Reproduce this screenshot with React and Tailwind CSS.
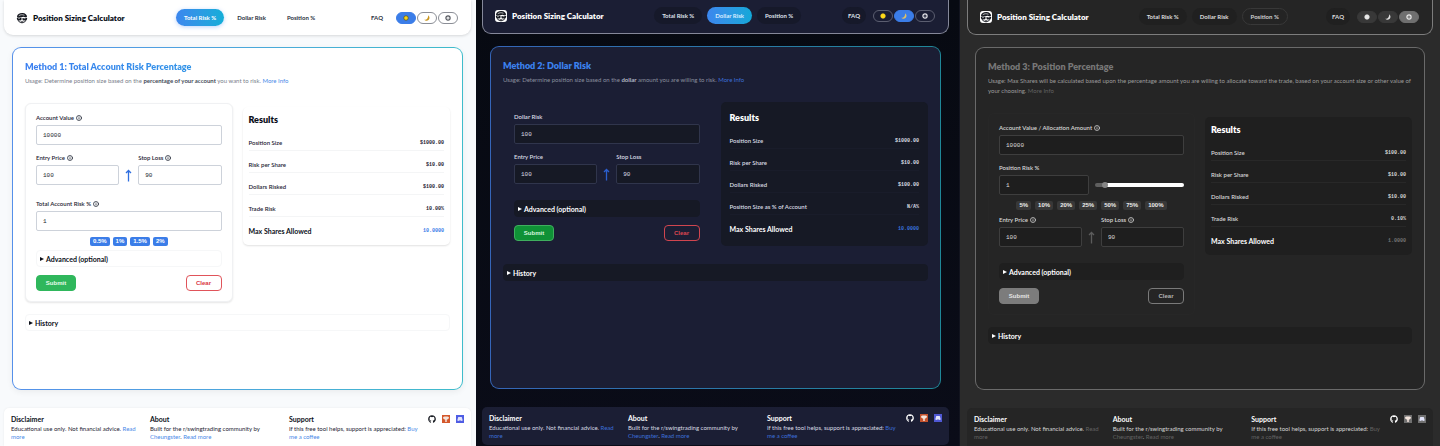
import clsx from 'clsx';
import { Info } from 'lucide-react';
import { FaGithub } from 'react-icons/fa';

const themes = {
  light: {
    page: 'bg-[#f8fafc] text-[#1e2433] pl-1 pr-[5px]',
    header: 'bg-white pt-[9px] rounded-b-[9px] shadow-[0_1px_3px_rgba(0,0,0,0.14)]',
    brand: 'text-[#0b0f19]',
    logo: 'bg-white',
    pill: 'text-[#2a3040]',
    activePill: 'bg-linear-to-r from-[#3b86ee] to-[#12aed8] text-white shadow-[0_1px_4px_rgba(59,130,246,0.35)]',
    toggle: 'border-[#8b8e96] bg-white text-[#55585f]',
    activeToggle: 'border-[#3b7de8] bg-[#3b7de8] text-[#333]',
    sun: '#f7d51d',
    sunEdge: '#5a5418',
    moon: '#c9951c',
    frame: 'bg-linear-to-r from-[#5590ea] to-[#3fbccb] shadow-[0_2px_6px_rgba(0,0,0,0.06)]',
    card: 'bg-white',
    title: 'bg-linear-to-r from-[#3b7ff0] to-[#12aed8] bg-clip-text text-transparent',
    usage: 'text-[#7a808c]',
    strong: 'text-[#454b58]',
    link: 'text-[#4a8ae8]',
    form: 'border-[#f0f1f3] bg-white shadow-[0_1px_2px_rgba(0,0,0,0.1)]',
    input: 'border-[#cdd2da] bg-white text-[#22262e]',
    arrow: 'text-[#2f6fe0]',
    chip: 'bg-[#3b7de8] text-white',
    details: 'border-[#f6f7f8] bg-white text-[#0b0f19]',
    submit: 'border-[#2fb75c] bg-[#2fb75c] text-[#e6fbec]',
    clear: 'border-[#e0545a] text-[#d9363e]',
    results: 'mt-1 px-1.5 pt-[7px] pb-1.5 bg-white shadow-[0_1px_2px_rgba(0,0,0,0.12)]',
    heading: 'text-[#0b0f19]',
    line: 'border-[#f4f5f6]',
    value: 'text-[#1e2433]',
    total: 'text-[#3b7de8]',
    footer: 'bg-white rounded-t-[5px] shadow-[0_0_2px_rgba(0,0,0,0.08)]',
    github: 'text-[#1a1d24]',
    reddit: 'bg-[#d4582c]',
    discord: 'bg-[#4f5de4]',
  },
  dark: {
    page: 'bg-linear-to-b from-[#070a12] to-[#0a0c18] text-[#d9dbe4] pl-1.5 pr-[10px]',
    header: 'bg-[#1b1e34] pt-[7px] rounded-b-[9px] border border-t-0 border-[#85889a]',
    brand: 'text-white',
    logo: 'bg-white',
    pill: 'bg-[#16192a] text-[#dfe1ea]',
    activePill: 'bg-linear-to-r from-[#3b86ee] to-[#12a8d8] text-[#d8ecff]',
    toggle: 'border-[#5b5e70] bg-[#1b1e34] text-[#e4e4e8]',
    activeToggle: 'border-[#3b7de8] bg-[#3b7de8] text-white',
    sun: '#ffd91a',
    sunEdge: '#ffd91a',
    moon: '#e0c268',
    frame: 'bg-linear-to-r from-[#3565b8] to-[#1f8798]',
    card: 'bg-[#1b1e34]',
    title: 'text-[#3b82f0]',
    usage: 'text-[#8a8e9e]',
    strong: 'text-[#b4b7c4]',
    link: 'text-[#3b6fd8]',
    form: 'border-transparent',
    input: 'border-[#30354c] bg-[#161925] text-[#d9dbe4]',
    arrow: 'text-[#2b5fd0]',
    chip: 'bg-[#3b7de8] text-white',
    details: 'border-[#161925] bg-[#161925] text-white',
    submit: 'border-[#3fae5e] bg-[#0f9136] text-[#d6f5df]',
    clear: 'border-[#d0454f] text-[#dc4650]',
    results: 'px-[9px] pt-2.5 pb-[9px] bg-[#161925]',
    heading: 'text-white',
    line: 'border-[#191c2a]',
    value: 'text-[#d9dbe4]',
    total: 'text-[#3a72dc]',
    footer: 'bg-[#1b1e34] rounded-[5px] mb-px',
    github: 'text-white',
    reddit: 'bg-[#c4532e]',
    discord: 'bg-[#4f58d4]',
  },
  gray: {
    page: 'border-l border-[#12141f] bg-[#2b2b2b] text-[#d6d6d6] pl-[7px] pr-[7px]',
    header: 'bg-[#252525] pt-2 rounded-b-[9px] border border-t-0 border-[#7d7d7d]',
    brand: 'text-white',
    logo: 'bg-white',
    pill: 'bg-[#202020] text-[#dcdcdc]',
    activePill: 'border border-[#383838] bg-[#242424] text-[#cfcfcf]',
    toggle: 'border-[#383838] bg-[#383838] text-[#e4e4e4]',
    activeToggle: 'border-[#6f6f6f] bg-[#6f6f6f] text-[#e8e8e8]',
    sun: '#e8e8e8',
    sunEdge: '#e8e8e8',
    moon: '#e0e0e0',
    frame: 'bg-[#6a6a6a]',
    card: 'bg-[#252525]',
    title: 'text-[#777777]',
    usage: 'text-[#9c9c9c]',
    strong: 'text-[#b4b4b4]',
    link: 'text-[#626262]',
    form: 'border-[#272727]',
    input: 'border-[#3e3e3e] bg-[#1e1e1e] text-[#dcdcdc]',
    arrow: 'text-[#5c5c5c]',
    chip: 'bg-[#383838] text-[#ececec]',
    details: 'border-[#1f1f1f] bg-[#1f1f1f] text-white',
    submit: 'border-[#7c7c7c] bg-[#7c7c7c] text-[#e6e6e6]',
    clear: 'border-[#7a7a7a] text-[#b4b4b4]',
    results: 'mt-1 px-1.5 pt-[7px] pb-1.5 bg-[#1f1f1f]',
    heading: 'text-white',
    line: 'border-[#282828]',
    value: 'text-[#d6d6d6]',
    total: 'text-[#757575]',
    footer: 'bg-[#252525] rounded-t-[5px]',
    github: 'text-white',
    reddit: 'bg-[#707070]',
    discord: 'bg-[#707070]',
  },
};

const navItems = ['Total Risk %', 'Dollar Risk', 'Position %'];

function Logo({ className }) {
  return (
    <svg viewBox="0 0 24 24" className={clsx('size-3 rounded-[3px]', className)} aria-hidden="true">
      <path d="M2 9C2.500 4.500 7 2 13 2.200c5.500.3 9 3.300 9 7.300l-1.500 1.500-6-1.500L9 11l-6 .5z" fill="#15181f" />
      <path d="M5.500 7.500c3-2.200 7-2.700 11.500-1" fill="none" stroke="#fff" strokeWidth="1.400" />
      <path d="M1.500 12h9.500v3.500c-2 2-6.500 2-8.500 0zM13 12h9.500l-1 3.500c-2 2-6.500 2-8.500 0z" fill="#15181f" />
      <path d="M4 13.200h4M15 13.200h4" stroke="#fff" />
      <path d="M3.800 15c.8 4 4 6.500 8.200 6.500s7.400-2.500 8.200-6.500" fill="none" stroke="#15181f" strokeWidth="2" />
      <path d="M9 18.300c2 1 4.500.8 6.500-.5" fill="none" stroke="#15181f" strokeWidth="1.500" />
    </svg>
  );
}

function ModeIcon({ mode, theme }) {
  if (mode === 'light') {
    return (
      <svg viewBox="0 0 12 12" className="size-1.5" aria-hidden="true">
        <circle cx="6" cy="6" r="4.500" fill={theme.sun} stroke={theme.sunEdge} strokeWidth="1.500" />
      </svg>
    );
  }
  if (mode === 'dark') {
    return (
      <svg viewBox="0 0 12 12" className="size-1.5" aria-hidden="true">
        <path d="M8.500.5c3.200 3 3.200 7 .5 9.500C6.500 12.200 2.500 12 .5 9.500c3 .2 5-.6 6.200-2.600C8 5 8.500 3 8.500.5z" fill={theme.moon} />
      </svg>
    );
  }
  return (
    <svg viewBox="0 0 12 12" className="size-1.5" aria-hidden="true">
      <circle cx="6" cy="6" r="4.200" fill="none" stroke="currentColor" strokeWidth="2.400" />
      <circle cx="6" cy="6" r="1" fill="currentColor" />
    </svg>
  );
}

function Header({ theme, mode, active }) {
  return (
    <header className={clsx('grid grid-cols-[161fr_190fr_91fr] items-center pb-[9px] pl-3 pr-[13px]', theme.header)}>
      <div className={clsx('flex items-center gap-[5px] text-[8px]/[12px] font-extrabold', theme.brand)}>
        <Logo className={theme.logo} />
        Position Sizing Calculator
      </div>
      <nav className="flex gap-[5px]">
        {navItems.map((item) => (
          <a
            key={item}
            href="#"
            className={clsx(
              'flex h-[17px] items-center justify-center rounded-full px-2 font-bold whitespace-nowrap',
              item === active ? theme.activePill : theme.pill,
            )}
          >
            {item}
          </a>
        ))}
      </nav>
      <div className="flex items-center justify-end gap-px">
        <a href="#" className={clsx('mr-1.5 flex h-[17px] items-center rounded-full px-1.5 font-bold', theme.pill)}>
          FAQ
        </a>
        {['light', 'dark', 'gray'].map((m) => (
          <button
            key={m}
            type="button"
            aria-label={`${m} theme`}
            className={clsx(
              'flex h-3 w-5 items-center justify-center rounded-full border',
              m === mode ? theme.activeToggle : theme.toggle,
            )}
          >
            <ModeIcon mode={m} theme={theme} />
          </button>
        ))}
      </div>
    </header>
  );
}

function Field({ theme, id, label, value, info, children }) {
  return (
    <div className="min-w-0">
      <label htmlFor={id} className="mb-[3px] flex items-center gap-0.5 font-semibold">
        {label}
        {info && <Info size={6} strokeWidth={3} />}
      </label>
      <div className="grid auto-cols-fr grid-flow-col items-center gap-1.5">
        <input
          id={id}
          type="text"
          defaultValue={value}
          className={clsx("h-5 w-full min-w-0 rounded-[2px] border px-1.5 font-['Liberation_Mono',monospace] text-[6px]", theme.input)}
        />
        {children}
      </div>
    </div>
  );
}

function Prices({ theme, id, info }) {
  return (
    <div className="grid grid-cols-[1fr_19px_1fr]">
      <Field theme={theme} id={`${id}-entry`} label="Entry Price" value="100" info={info} />
      <div className={clsx('flex h-5 items-center justify-center self-end', theme.arrow)}>
        <svg viewBox="0 0 7 13" className="h-[13px] w-[7px]" fill="none" stroke="currentColor" strokeWidth="1.300" aria-hidden="true">
          <path d="M3.500 12.500V1.500M1 4l2.500-2.500L6 4" />
        </svg>
      </div>
      <Field theme={theme} id={`${id}-stop`} label="Stop Loss" value="90" info={info} />
    </div>
  );
}

function Chips({ theme, items, className }) {
  return (
    <div className={clsx('flex justify-center', className)}>
      {items.map((item) => (
        <button
          key={item}
          type="button"
          className={clsx("rounded-[2px] px-[3px] font-['Liberation_Sans',sans-serif] text-[6px]/[9px] font-bold", theme.chip)}
        >
          {item}
        </button>
      ))}
    </div>
  );
}

function Disclosure({ theme, label, className }) {
  return (
    <details className={clsx('rounded-[4px] border', theme.details, className)}>
      <summary className="flex h-[15px] list-none items-center gap-0.5 px-[3px] text-[7px]/[8px] font-bold">
        <svg viewBox="0 0 4 4" className="size-1" fill="currentColor" aria-hidden="true">
          <path d="M0 0l4 2-4 2z" />
        </svg>
        {label}
      </summary>
    </details>
  );
}

function Results({ theme, rows, total }) {
  return (
    <section className={clsx('self-start rounded-[5px]', theme.results)}>
      <h2 className={clsx('mb-[3px] text-[9px]/[12px] font-extrabold', theme.heading)}>Results</h2>
      <table className="w-full">
        <tbody>
          {rows.map(([label, value]) => (
            <tr key={label} className={clsx('border-b', theme.line)}>
              <th scope="row" className="pt-2.5 pb-[3px] text-left font-semibold">{label}</th>
              <td className={clsx("pt-2.5 pb-[3px] text-right font-['Liberation_Mono',monospace] text-[5px]/[8px] font-bold", theme.value)}>
                {value}
              </td>
            </tr>
          ))}
          <tr>
            <th scope="row" className={clsx('pt-2.5 pb-1 text-left text-[7px]/[8px] font-bold', theme.heading)}>
              Max Shares Allowed
            </th>
            <td className={clsx("pt-2.5 pb-1 text-right font-['Liberation_Mono',monospace] text-[5px]/[8px] font-bold", theme.total)}>
              {total}
            </td>
          </tr>
        </tbody>
      </table>
    </section>
  );
}

function Footer({ theme }) {
  return (
    <footer className={clsx('mt-[18px] grid grid-cols-[1fr_1fr_1fr_36px] px-[7px] pt-[7px] pb-[5px]', theme.footer)}>
      <div className="pr-2.5">
        <h3 className={clsx('mb-0.5 text-[7px]/[8px] font-bold', theme.heading)}>Disclaimer</h3>
        <p>Educational use only. Not financial advice. <a href="#" className={theme.link}>Read more</a></p>
      </div>
      <div className="pr-2.5">
        <h3 className={clsx('mb-0.5 text-[7px]/[8px] font-bold', theme.heading)}>About</h3>
        <p>
          Built for the r/swingtrading community by <a href="#" className={theme.link}>Cheungster</a>.{' '}
          <a href="#" className={theme.link}>Read more</a>
        </p>
      </div>
      <div className="pr-2.5">
        <h3 className={clsx('mb-0.5 text-[7px]/[8px] font-bold', theme.heading)}>Support</h3>
        <p>If this free tool helps, support is appreciated: <a href="#" className={theme.link}>Buy me a coffee</a></p>
      </div>
      <div className="flex items-start justify-between">
        <a href="#" aria-label="GitHub" className={theme.github}>
          <FaGithub size={8} />
        </a>
        <a href="#" aria-label="Reddit" className={theme.reddit}>
          <svg viewBox="0 0 16 16" className="size-2" aria-hidden="true">
            <path d="M2 5.500C2 4 4 3 8 3s6 1 6 2.500S12 8 11 8v1.500H9.500V14h-3V9.500H5V8C3.500 8 2 7 2 5.500z" fill="#f3e4dc" />
          </svg>
        </a>
        <a href="#" aria-label="Discord" className={theme.discord}>
          <svg viewBox="0 0 16 16" className="size-2" aria-hidden="true">
            <path d="M4.500 4h7L13.500 11l-3 1-.8-1.200H6.300L5.500 12l-3-1z" fill="#e2e4fb" />
          </svg>
        </a>
      </div>
    </footer>
  );
}

function Calculator({ mode, active, title, usage, rows, total, fields }) {
  const theme = themes[mode];
  return (
    <div className={clsx('flex min-h-screen min-w-0 flex-col', theme.page)}>
      <Header theme={theme} mode={mode} active={active} />
      <main className={clsx('mx-2 mt-3 flex grow flex-col rounded-[9px] p-px', theme.frame)}>
        <div className={clsx('grow rounded-[8px] p-3', theme.card)}>
          <h1 className={clsx('mt-px text-[9px]/[12px] font-extrabold', theme.title)}>{title}</h1>
          <p className={clsx('mt-[3px] leading-[10px]', theme.usage)}>
            {usage(theme)} <a href="#" className={theme.link}>More Info</a>
          </p>
          <div className="mt-[17px] grid grid-cols-2 gap-2.5">
            <form className={clsx('rounded-[6px] border p-2.5', theme.form)}>
              {fields(theme)}
              <Disclosure theme={theme} label="Advanced (optional)" />
              <div className="mt-2 flex justify-between font-['Liberation_Sans',sans-serif] font-bold">
                <button type="button" className={clsx('h-4 w-10 rounded-[4px] border', theme.submit)}>Submit</button>
                <button type="button" className={clsx('h-4 w-9 rounded-[4px] border', theme.clear)}>Clear</button>
              </div>
            </form>
            <Results theme={theme} rows={rows} total={total} />
          </div>
          <Disclosure theme={theme} label="History" className="mt-3" />
        </div>
      </main>
      <Footer theme={theme} />
    </div>
  );
}

const calculators = [
  {
    mode: 'light',
    active: 'Total Risk %',
    title: 'Method 1: Total Account Risk Percentage',
    usage: (theme) => (
      <>
        Usage: Determine position size based on the <b className={theme.strong}>percentage of your account</b> you want to risk.
      </>
    ),
    rows: [
      ['Position Size', '$1000.00'],
      ['Risk per Share', '$10.00'],
      ['Dollars Risked', '$100.00'],
      ['Trade Risk', '10.00%'],
    ],
    total: '10.0000',
    fields: (theme) => (
      <div className="mb-1 flex flex-col gap-[9px]">
        <Field theme={theme} id="total-account" label="Account Value" value="10000" info />
        <Prices theme={theme} id="total" info />
        <div className="mt-1.5">
          <Field theme={theme} id="total-risk" label="Total Account Risk %" value="1" info />
          <Chips theme={theme} items={['0.5%', '1%', '1.5%', '2%']} className="mt-1.5 gap-[3px]" />
        </div>
      </div>
    ),
  },
  {
    mode: 'dark',
    active: 'Dollar Risk',
    title: 'Method 2: Dollar Risk',
    usage: (theme) => (
      <>
        Usage: Determine position size based on the <b className={theme.strong}>dollar</b> amount you are willing to risk.
      </>
    ),
    rows: [
      ['Position Size', '$1000.00'],
      ['Risk per Share', '$10.00'],
      ['Dollars Risked', '$100.00'],
      ['Position Size as % of Account', 'N/A%'],
    ],
    total: '10.0000',
    fields: (theme) => (
      <div className="mb-4 flex flex-col gap-[9px]">
        <Field theme={theme} id="dollar-risk" label="Dollar Risk" value="100" />
        <Prices theme={theme} id="dollar" />
      </div>
    ),
  },
  {
    mode: 'gray',
    active: 'Position %',
    title: 'Method 3: Position Percentage',
    usage: () =>
      'Usage: Max Shares will be calculated based upon the percentage amount you are willing to allocate toward the trade, based on your account size or other value of your choosing.',
    rows: [
      ['Position Size', '$100.00'],
      ['Risk per Share', '$10.00'],
      ['Dollars Risked', '$10.00'],
      ['Trade Risk', '0.10%'],
    ],
    total: '1.0000',
    fields: (theme) => (
      <div className="mb-4 flex flex-col gap-[9px]">
        <Field theme={theme} id="position-account" label="Account Value / Allocation Amount" value="10000" info />
        <div>
          <Field theme={theme} id="position-risk" label="Position Risk %" value="1">
            <input
              type="range"
              aria-label="Position Risk % slider"
              defaultValue={9}
              className="h-1 w-full min-w-0 appearance-none rounded-full bg-linear-to-r from-[#5f5f5f] from-11% to-white to-11% [&::-webkit-slider-thumb]:size-1.5 [&::-webkit-slider-thumb]:appearance-none [&::-webkit-slider-thumb]:rounded-full [&::-webkit-slider-thumb]:bg-[#858585]"
            />
          </Field>
          <Chips theme={theme} items={['5%', '10%', '20%', '25%', '50%', '75%', '100%']} className="-mb-[3px] mt-1.5 gap-1" />
        </div>
        <Prices theme={theme} id="position" info />
      </div>
    ),
  },
];

export default function App() {
  return (
    <div className="grid min-h-screen grid-cols-[476fr_483fr_481fr] font-['Lato',sans-serif] text-[6px]/[8px]">
      {calculators.map((calculator) => (
        <Calculator key={calculator.mode} {...calculator} />
      ))}
    </div>
  );
}
